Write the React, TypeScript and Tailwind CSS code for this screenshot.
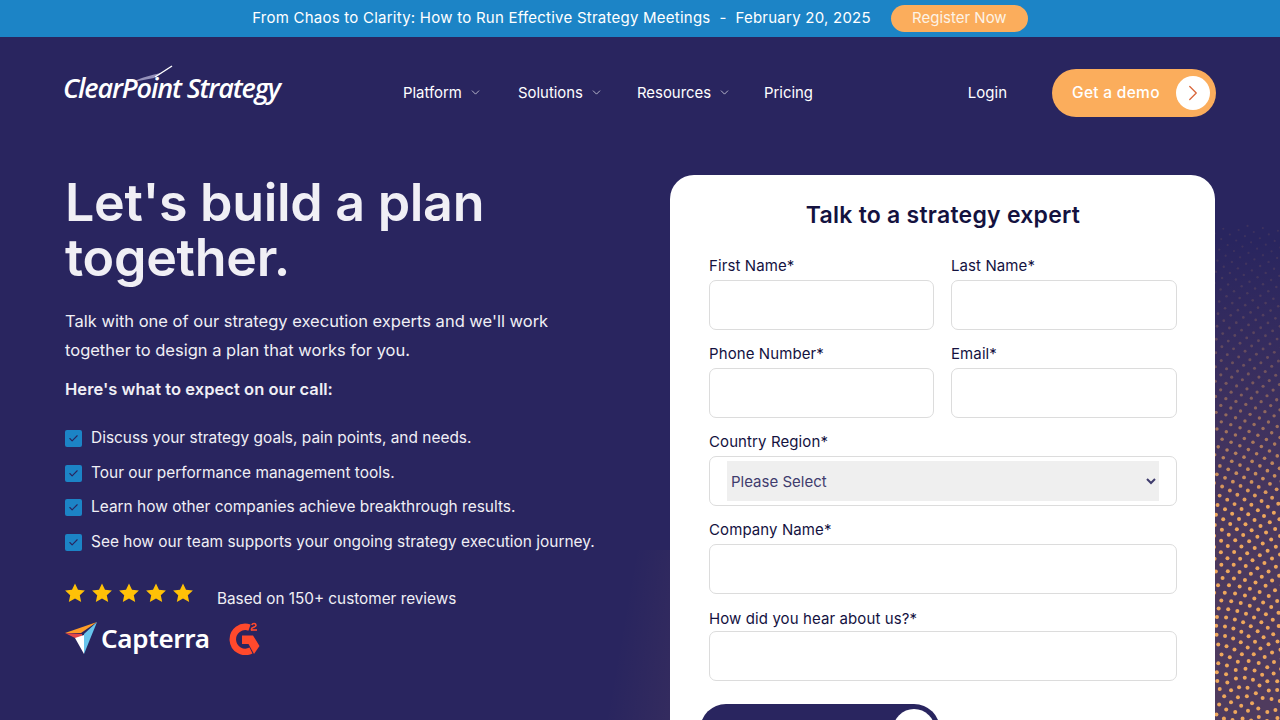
import React from "react";
import { ChevronDown, ChevronRight, Check } from "lucide-react";

function Dots() {
  const dots: React.ReactElement[] = [];
  const cx = 1262, cy = 705;
  for (let n = 1; n < 9500; n++) {
    const r = 5.05 * Math.sqrt(n);
    const a = n * 2.39996;
    const x = cx + r * Math.cos(a);
    const y = cy + r * Math.sin(a);
    if (x < 1214 || x > 1282 || y < 225 || y > 722) continue;
    const t = Math.min(1, Math.max(0, (y - 240) / 270));
    const s = 1.1 + 0.9 * t;
    dots.push(<circle key={n} cx={x - 1214} cy={y - 200} r={s} fill="#f2a95c" opacity={0.1 + 0.88 * t * t} />);
  }
  return (
    <svg className="absolute left-[1214px] top-[200px]" width="66" height="520" viewBox="0 0 66 520">
      {dots}
    </svg>
  );
}

function Star() {
  return (
    <svg width="20" height="20" viewBox="0 0 20 20">
      <path d="M10 .4l3 6.3 6.9.8-5.1 4.7 1.4 6.8-6.2-3.4-6.2 3.4 1.4-6.8-5.1-4.7 6.9-.8z" fill="#ffc107" />
    </svg>
  );
}

function Field({ label, low = false }: { label: string; low?: boolean }) {
  return (
    <div className="flex flex-col min-w-0">
      <label className={`h-[24px] text-[15px] tracking-[0.1px] text-[#14123f] ${low ? "leading-[24px]" : "leading-[20px]"}`}>{label}</label>
      <input className="h-[50px] w-full rounded-[7px] border border-[#dcdcdc] bg-white" />
    </div>
  );
}

function NavItem({ label, caret = true, w }: { label: string; caret?: boolean; w: string }) {
  return (
    <span className={`flex items-center gap-[7px] text-[14.9px] text-white ${w}`}>
      {label}
      {caret && <ChevronDown size={13} strokeWidth={1.2} className="text-white" />}
    </span>
  );
}

const items = [
  "Discuss your strategy goals, pain points, and needs.",
  "Tour our performance management tools.",
  "Learn how other companies achieve breakthrough results.",
  "See how our team supports your ongoing strategy execution journey.",
];

export default function App() {
  return (
    <div
      className="relative h-[720px] w-[1280px] overflow-hidden bg-[#29255f]"
      style={{ fontFamily: "Inter, 'Noto Sans', sans-serif" }}
    >
      <div className="flex h-[37px] items-center justify-center bg-[#1c84c6]">
        <span className="text-[15px] tracking-[0.24px] text-white">
          From Chaos to Clarity: How to Run Effective Strategy Meetings&nbsp; -&nbsp; February 20, 2025
        </span>
        <span className="ml-[20px] flex h-[27px] w-[137px] items-center justify-center rounded-full bg-[#fbad5c] text-[15px] text-[#fdf3e6]">
          Register Now
        </span>
      </div>

      <div className="flex h-[112px] items-center pl-[64px] pr-[64px]">
        <div className="relative h-[40px] w-[218px]">
          <svg className="absolute left-[66px] top-[-8px]" width="50" height="24" viewBox="0 0 50 24">
            <path d="M42 1 L24 13 L3 17 C12 12 22 10 31 8 Z" fill="#b9b6d8" opacity="0.75" />
            <path d="M42 1 L25 12" stroke="#ffffff" strokeWidth="1.4" />
          </svg>
          <span
            className="absolute left-[-1px] top-[-3px] whitespace-nowrap text-[27px] font-semibold italic leading-[36px] tracking-[-1.15px] text-white"
            style={{ fontFamily: "'Open Sans', sans-serif" }}
          >
            ClearPoint Strategy
          </span>
        </div>
        <div className="ml-[121px] flex items-center">
          <NavItem label="Platform" w="w-[115px]" />
          <NavItem label="Solutions" w="w-[119px]" />
          <NavItem label="Resources" w="w-[127px]" />
          <NavItem label="Pricing" caret={false} w="w-[60px]" />
        </div>
        <span className="ml-auto text-[15px] text-white">Login</span>
        <div className="ml-[45px] flex h-[48px] w-[164px] items-center justify-between rounded-full bg-[#fbad5c] pl-[20px] pr-[6px]">
          <span className="text-[15.5px] font-medium tracking-[0.3px] text-white">Get a demo</span>
          <span className="flex h-[34px] w-[34px] items-center justify-center rounded-full bg-white">
            <ChevronRight size={26} strokeWidth={1.2} className="text-[#d9663a]" />
          </span>
        </div>
      </div>

      <div
        className="absolute bottom-0 left-[570px] h-[170px] w-[100px]"
        style={{ background: "linear-gradient(100deg, rgba(255,160,90,0) 50%, rgba(255,160,90,0.05) 100%)" }}
      />
      <div
        className="absolute right-0 top-[240px] h-[480px] w-[65px]"
        style={{ background: "linear-gradient(180deg, rgba(255,160,90,0) 0%, rgba(255,160,90,0.16) 60%, rgba(255,160,90,0.18) 100%)" }}
      />
      <Dots />

      <div className="relative flex items-start pl-[65px] pt-[26px]">
        <div className="w-[605px] shrink-0 text-[#f0eff5]">
          <h1 className="text-[52px] font-semibold leading-[55px] tracking-[-0.3px]">
            Let's build a plan
            <br />
            together.
          </h1>
          <p className="mt-[22px] w-[520px] text-[16.5px] leading-[29px]">
            Talk with one of our strategy execution experts and we'll work together to design a plan that works for you.
          </p>
          <p className="mt-[12px] text-[16.5px] font-semibold leading-[24px] tracking-[0.05px]">Here's what to expect on our call:</p>
          <ul className="mt-[24.6px] flex flex-col gap-[10.7px]">
            {items.map((t) => (
              <li key={t} className="flex h-[24px] items-center gap-[9px] text-[15.45px]">
                <span className="flex h-[17px] w-[17px] shrink-0 translate-y-[1px] items-center justify-center rounded-[2px] bg-[#1c84c6]">
                  <Check size={11} strokeWidth={2.4} className="text-[#29255f]" />
                </span>
                {t}
              </li>
            ))}
          </ul>
          <div className="mt-[27.4px] flex items-center">
            <div className="flex gap-[7px]">
              <Star />
              <Star />
              <Star />
              <Star />
              <Star />
            </div>
            <span className="ml-[24px] translate-y-[7px] text-[15.3px]">Based on 150+ customer reviews</span>
          </div>
          <div className="mt-[17px] flex items-center">
            <svg width="34" height="34" viewBox="0 0 34 34">
              <path d="M0 12 L16 12 L32 1 Z" fill="#ff9d28" />
              <path d="M32 1 L19 13 L19 33 Z" fill="#68c5ed" />
              <path d="M0 12 L10 17 L17 17 L17 13 Z" fill="#e54747" />
              <path d="M10 17 L19 14 L19 33 Z" fill="#ffffff" />
            </svg>
            <span
              className="ml-[2px] text-[26px] font-semibold leading-[34px] tracking-[-0.3px] text-white"
              style={{ fontFamily: "'Noto Sans', sans-serif" }}
            >
              Capterra
            </span>
            <svg className="ml-[18px]" width="33" height="34" viewBox="0 0 33 34">
              <path d="M21.5 6.6 A12.5 12.5 0 1 0 23 29.5" fill="none" stroke="#ff492c" strokeWidth="6.5" />
              <path d="M14 14.5 H25 L31.5 25 L26 33 L20.5 23 H14 Z" fill="#ff492c" />
              <path d="M23.5 9.5 V8 C23.5 6 28.5 6.5 28 4 C27.7 2.2 24.5 2 23.8 4" fill="none" stroke="#ff492c" strokeWidth="1.6" />
              <path d="M23 9 H29" stroke="#ff492c" strokeWidth="1.6" />
            </svg>
          </div>
        </div>

        <div className="h-[600px] w-[545px] shrink-0 rounded-t-[24px] bg-white pl-[39px] pr-[38px] pt-[23px]">
          <h2 className="text-center text-[23px] font-semibold leading-[34px] tracking-[0.25px] text-[#14123f]">Talk to a strategy expert</h2>
          <div className="mt-[24px] flex flex-col gap-[14px]">
            <div className="grid grid-cols-[225px_226px] gap-x-[17px]">
              <Field label="First Name*" />
              <Field label="Last Name*" />
            </div>
            <div className="grid grid-cols-[225px_226px] gap-x-[17px]">
              <Field label="Phone Number*" />
              <Field label="Email*" />
            </div>
            <div className="flex flex-col">
              <label className="h-[24px] text-[15px] leading-[20px] tracking-[0.1px] text-[#14123f]">Country Region*</label>
              <div className="flex h-[50px] items-center rounded-[7px] border border-[#dcdcdc] px-[17px]">
                <select className="h-[40px] w-full bg-[#efefef] text-[15px] text-[#3f3c6d]" defaultValue="">
                  <option value="">Please Select</option>
                </select>
              </div>
            </div>
            <Field label="Company Name*" />
            <div className="-mt-[1px]">
              <Field label="How did you hear about us?*" low />
            </div>
          </div>
          <div className="-ml-[9px] mt-[23px] flex h-[52px] w-[240px] items-start justify-end rounded-full bg-[#29255f] pr-[5px] pt-[5px]">
            <span className="h-[42px] w-[42px] rounded-full bg-white" />
          </div>
        </div>
      </div>
    </div>
  );
}
